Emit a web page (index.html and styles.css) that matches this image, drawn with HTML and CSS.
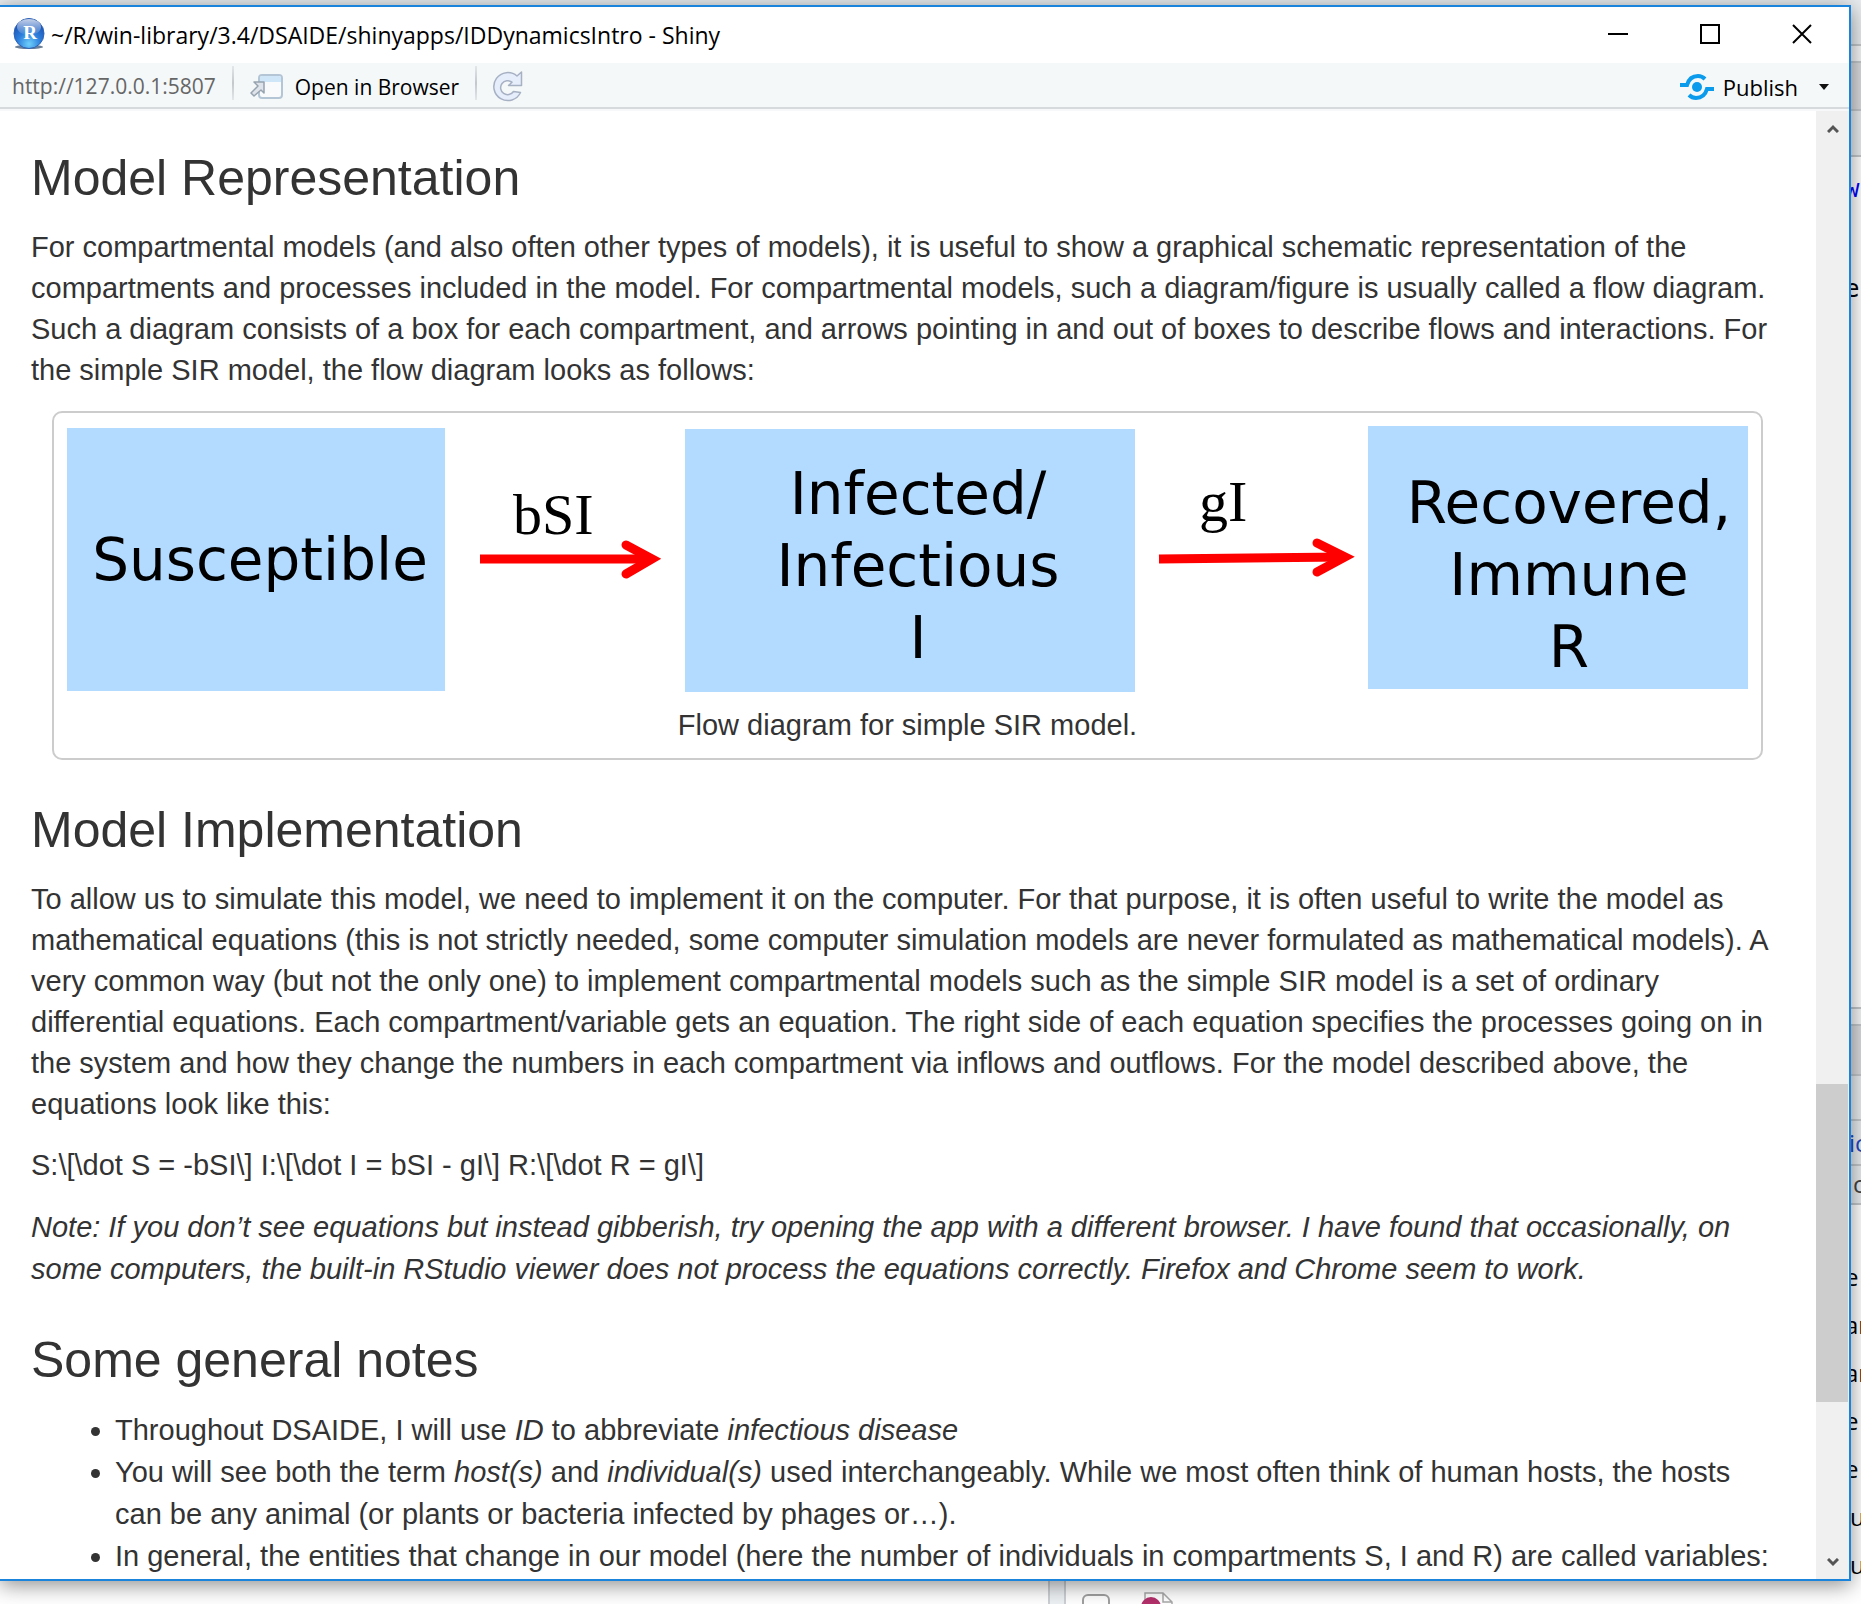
FILE: index.html
```html
<!DOCTYPE html>
<html lang="en">
<head>
<meta charset="utf-8">
<title>IDDynamicsIntro - Shiny</title>
<link rel="stylesheet" href="styles.css">
</head>
<body>
<div class="desktop">
  <div class="behind-right" aria-hidden="true">
    <div class="band band-a"></div>
    <div class="band band-b"></div>
    <div class="band band-c"></div>
    <div class="band band-d"></div>
    <div class="band editor"><span class="kw">w</span><span class="code">e</span></div>
    <div class="band band-b"></div>
    <div class="band band-e"></div>
    <div class="band band-f"></div>
    <div class="band tool link">ic</div>
    <div class="band tool crumb">c</div>
    <div class="files"><span>e</span><span>ar</span><span>ar</span><span>e</span><span>e</span><span class="inset">u</span><span class="inset">u</span></div>
  </div>
  <div class="behind-bottom" aria-hidden="true">
    <div class="splitter"></div>
    <div class="tick"></div>
    <svg class="file-icon" width="34" height="16" viewBox="0 0 34 16"><path d="M5 16V1h18l9 9v6M23 1v9h9" fill="#fff" stroke="#a9a9a9" stroke-width="1.5"/><circle cx="11" cy="15" r="10" fill="#b3306a"/></svg>
  </div>

  <main class="window">
    <header class="titlebar">
      <svg class="app-icon" width="32" height="32" viewBox="0 0 32 32">
        <defs>
          <radialGradient id="ball" cx=".5" cy=".85" r=".85"><stop offset="0" stop-color="#6fd0fa"/><stop offset=".45" stop-color="#2d7fdc"/><stop offset="1" stop-color="#1745a8"/></radialGradient>
          <linearGradient id="gloss" x1="0" y1="0" x2="0" y2="1"><stop offset="0" stop-color="#fff" stop-opacity=".75"/><stop offset="1" stop-color="#fff" stop-opacity=".05"/></linearGradient>
        </defs>
        <ellipse cx="16" cy="29" rx="14" ry="2" fill="#6b7f96"/>
        <circle cx="16" cy="15.500" r="15" fill="url(#ball)" stroke="#2f62b5"/>
        <ellipse cx="16" cy="9" rx="12" ry="8" fill="url(#gloss)"/>
        <text x="17" y="21" text-anchor="middle" class="app-letter">R</text>
      </svg>
      <h1 class="title">~/R/win-library/3.4/DSAIDE/shinyapps/IDDynamicsIntro - Shiny</h1>
      <div class="controls">
        <button type="button" aria-label="Minimize"><svg width="20" height="20"><path d="M0 10h20" stroke="#000" stroke-width="2"/></svg></button>
        <button type="button" aria-label="Maximize"><svg width="20" height="20"><path d="M1 1h18v18H1z" fill="none" stroke="#000" stroke-width="2"/></svg></button>
        <button type="button" aria-label="Close"><svg width="20" height="20"><path d="M1 1l18 18M19 1L1 19" stroke="#000" stroke-width="2"/></svg></button>
      </div>
    </header>

    <nav class="toolbar">
      <span class="address">http://127.0.0.1:5807</span>
      <span class="divider"></span>
      <button type="button" class="tool-button open">
        <svg width="34" height="26" viewBox="0 0 34 26"><rect x="9" y="1" width="23" height="23" rx="3" fill="#f8fafc" stroke="#b4c6d6" stroke-width="2"/><path d="M10 8V4q0-2 2-2h17q2 0 2 2v4z" fill="#cfe6f8"/><path d="M14 8v11l-3-3-7 6-3-3 7-7-4-4z" fill="#dfe4ea" stroke="#97a3af" stroke-width="1.500" stroke-linejoin="round"/></svg>
        <span>Open in Browser</span>
      </button>
      <span class="divider"></span>
      <button type="button" class="tool-button" aria-label="Reload"><svg width="30" height="32" viewBox="0 0 30 32"><path d="M28.500 1v13.500h-13L19 11.200A7 7 0 1 0 20.500 20.500L27.500 21.500A14 14 0 1 1 24 5z" fill="#e6edfb" stroke="#a7b1c4" stroke-width="1.500" stroke-linejoin="round"/></svg></button>
      <button type="button" class="tool-button publish">
        <svg width="34" height="26" viewBox="0 0 34 26"><circle cx="17" cy="13" r="5" fill="#0a9bec"/><path d="M0 11h7C9 4 14 2 18 2c3 0 5 1 7 3M34 15h-7c-2 7-7 9-11 9-3 0-5-1-7-3" fill="none" stroke="#0a9bec" stroke-width="4"/></svg>
        <span>Publish</span>
        <svg class="caret" width="10" height="6"><path d="M0 0h10L5 6z" fill="#111"/></svg>
      </button>
    </nav>

    <div class="viewport">
      <article class="page">
        <h2>Model Representation</h2>
        <p>For compartmental models (and also often other types of models), it is useful to show a graphical schematic representation of the compartments and processes included in the model. For compartmental models, such a diagram/figure is usually called a flow diagram. Such a diagram consists of a box for each compartment, and arrows pointing in and out of boxes to describe flows and interactions. For the simple SIR model, the flow diagram looks as follows:</p>
        <figure class="diagram">
          <svg viewBox="0 0 1681 266" role="img" aria-label="Flow diagram">
            <g fill="#b3daff"><rect x="0" y="2" width="378" height="263"/><rect x="618" y="3" width="450" height="263"/><rect x="1301" y="0" width="380" height="263"/></g>
            <g class="box-text">
              <text x="193" y="154">Susceptible</text>
              <text x="851" y="88">Infected/</text><text x="851" y="160">Infectious</text><text x="851" y="232">I</text>
              <text x="1502" y="97">Recovered,</text><text x="1502" y="169">Immune</text><text x="1502" y="241">R</text>
            </g>
            <g class="rate-text"><text x="446" y="108">bSI</text><text x="1132" y="95">gI</text></g>
            <g fill="none" stroke="#f00" stroke-width="9">
              <path d="M413 133h170"/><path d="M559 119l26 14-26 15" stroke-linecap="round"/>
              <path d="M1092 133l186-2"/><path d="M1250 117l28 14-28 15" stroke-linecap="round"/>
            </g>
          </svg>
          <figcaption>Flow diagram for simple SIR model.</figcaption>
        </figure>
        <h2>Model Implementation</h2>
        <p>To allow us to simulate this model, we need to implement it on the computer. For that purpose, it is often useful to write the model as mathematical equations (this is not strictly needed, some computer simulation models are never formulated as mathematical models). A very common way (but not the only one) to implement compartmental models such as the simple SIR model is a set of ordinary differential equations. Each compartment/variable gets an equation. The right side of each equation specifies the processes going on in the system and how they change the numbers in each compartment via inflows and outflows. For the model described above, the equations look like this:</p>
        <p>S:\[\dot S = -bSI\] I:\[\dot I = bSI - gI\] R:\[\dot R = gI\]</p>
        <p class="note"><em>Note: If you don’t see equations but instead gibberish, try opening the app with a different browser. I have found that occasionally, on some computers, the built-in RStudio viewer does not process the equations correctly. Firefox and Chrome seem to work.</em></p>
        <h2>Some general notes</h2>
        <ul>
          <li>Throughout DSAIDE, I will use <em>ID</em> to abbreviate <em>infectious disease</em></li>
          <li>You will see both the term <em>host(s)</em> and <em>individual(s)</em> used interchangeably. While we most often think of human hosts, the hosts can be any animal (or plants or bacteria infected by phages or…).</li>
          <li>In general, the entities that change in our model (here the number of individuals in compartments S, I and R) are called variables:</li>
        </ul>
      </article>
      <div class="scrollbar" aria-hidden="true">
        <svg width="12" height="9"><path d="M1 8l5-5 5 5" fill="none" stroke="#555" stroke-width="3"/></svg>
        <div class="track"><div class="thumb"></div></div>
        <svg width="12" height="9"><path d="M1 1l5 5 5-5" fill="none" stroke="#555" stroke-width="3"/></svg>
      </div>
    </div>
  </main>
</div>
</body>
</html>
```

FILE: styles.css
```css
* { box-sizing: border-box; }

body {
  margin: 0;
  color: #333;
  background: #fff;
  font-family: "Liberation Sans", Arial, sans-serif;
}

.desktop {
  position: relative;
  height: 100vh;
  padding: 5px 10px 23px 0;
  overflow: hidden;
  background: #fff linear-gradient(#e8ecee, #e8ecee) top / 100% 46px no-repeat;
}

/* The main application, seen past the edges of the viewer window */
.behind-right {
  position: absolute;
  top: 0;
  right: 0;
  bottom: 0;
  width: 16px;
  overflow: hidden;
  font-family: "Open Sans", sans-serif;
  font-size: 24px;
  color: #000;
}
.band { border-bottom: 2px solid #c4c8cb; background: #e8ecee; }
.band-a { height: 46px; }
.band-b { height: 17px; background: #f4f5f6; }
.band-c { height: 48px; background: #d8dadd; }
.band-d { height: 46px; }
.band-e { height: 50px; background: #d8dadd; }
.band-f { height: 45px; }
.editor {
  display: flex;
  flex-direction: column;
  gap: 51px;
  height: 852px;
  padding-top: 8px;
  background: #fff;
  font-family: "DejaVu Sans Mono", monospace;
  line-height: 49px;
}
.kw { color: #00f; }
.tool { height: 45px; line-height: 43px; padding-left: 4px; }
.link { color: #1f45c8; }
.crumb { height: 39px; line-height: 35px; padding-left: 8px; color: #444; }
.files { display: flex; flex-direction: column; padding-top: 48px; background: #fff; }
.files span { line-height: 48px; }
.files .inset { padding-left: 5px; }

.behind-bottom {
  position: absolute;
  left: 1048px;
  bottom: 0;
  display: flex;
  height: 23px;
}
.splitter {
  width: 18px;
  border: solid #ccd0d4;
  border-width: 0 2px;
  background: #eef1f4;
}
.tick {
  width: 28px;
  height: 28px;
  margin: 13px 30px 0 16px;
  border: 2px solid #a0a0a0;
  border-radius: 6px;
}
.file-icon { margin-top: 11px; }

/* Viewer window */
.window {
  position: relative;
  display: flex;
  flex-direction: column;
  height: 100%;
  border: solid #1a83db;
  border-width: 2px 2px 2px 0;
  background: #fff;
  box-shadow: 0 4px 20px rgba(0, 0, 0, 0.45);
}

.titlebar {
  display: flex;
  flex: none;
  align-items: center;
  height: 56px;
  padding: 0 1px 2px 13px;
  font-family: "Open Sans", sans-serif;
  color: #000;
}
.app-icon { margin-right: 6px; }
.app-letter { font: bold 19px "Liberation Serif", serif; fill: #fff; }
.title { margin: 0; padding-top: 2px; font-size: 23px; font-weight: 400; }
.controls { display: flex; margin-left: auto; }
button {
  padding: 0;
  border: 0;
  background: none;
  font: inherit;
  color: inherit;
}
.controls button { width: 92px; height: 54px; }
.controls svg { display: block; margin: auto; }

.toolbar {
  display: flex;
  flex: none;
  align-items: center;
  height: 46px;
  padding: 3px 20px 0 12px;
  border-bottom: 2px solid #d6dadc;
  background: #f4f8f9;
  font-family: "Open Sans", sans-serif;
  font-size: 21px;
  color: #000;
}
.address { padding-bottom: 2px; color: #666; }
.divider {
  align-self: flex-start;
  width: 2px;
  height: 34px;
  margin: 0 16px;
  background: linear-gradient(#e4e7e9, #c4c8cb, #e4e7e9);
}
.tool-button { display: flex; align-items: center; }
.open { gap: 11px; }
.publish { gap: 9px; margin-left: auto; font-size: 22px; }
.caret { margin-left: 12px; }

.viewport {
  display: flex;
  flex: 1;
  min-height: 0;
  overflow: hidden;
  border-top: 2px solid #f7f8f9;
}
.page { flex: 1; padding: 40px 32px 0 31px; font-size: 29px; line-height: 41px; }
h2 { margin: 43px 0 21px; font-size: 50px; font-weight: 400; line-height: 55px; }
.page > h2:first-child { margin-top: 0; }
p { margin: 0 0 20px; }
.note, ul { line-height: 42px; }
ul { margin: 0; padding-left: 84px; }

.diagram {
  margin: 0 21px;
  padding: 13px 13px 12px;
  border: 2px solid #ccc;
  border-radius: 10px;
  text-align: center;
}
.diagram svg { display: block; width: 100%; height: auto; margin-bottom: 13px; }
.box-text { font: 58px "DejaVu Sans", sans-serif; text-anchor: middle; fill: #000; }
.rate-text { font: 58px "Liberation Serif", serif; fill: #000; }

.scrollbar {
  display: flex;
  flex: none;
  flex-direction: column;
  align-items: center;
  width: 33px;
  padding: 13px 0 12px;
  background: #f0f0f0;
}
.track {
  display: grid;
  flex: 1;
  align-self: stretch;
  grid-template-rows: 943fr 319fr 146fr;
  margin: 10px 1px 10px 0;
}
.thumb { grid-row: 2; background: #cdcdcd; }
```
